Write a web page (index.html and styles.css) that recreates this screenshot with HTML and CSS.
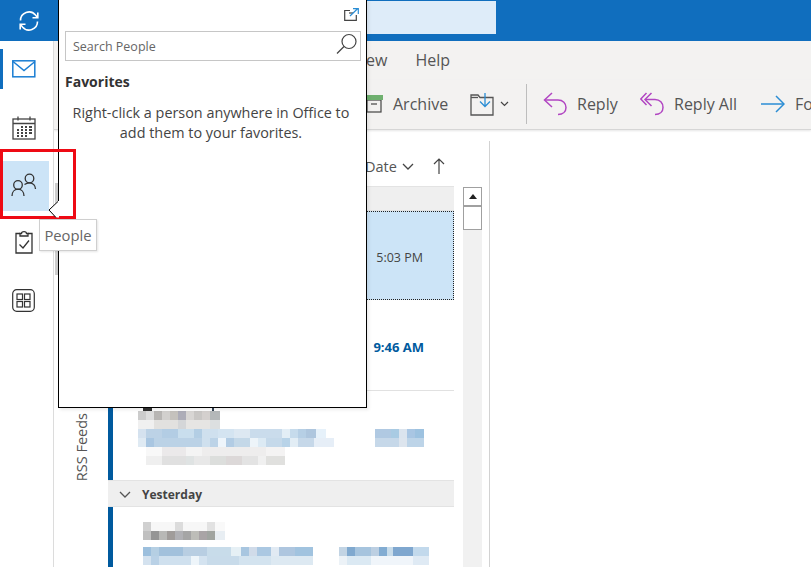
FILE: index.html
```html
<!DOCTYPE html>
<html lang="en">
<head>
<meta charset="utf-8">
<title>Outlook People</title>
<link rel="stylesheet" href="styles.css">
</head>
<body>
<div class="app">
  <header class="topbar">
    <svg class="sync" width="24" height="24" viewBox="0 0 24 24" fill="none" stroke="#fff" stroke-width="1.6"><path d="M3.500 11.500A8.500 8.500 0 0 1 18.500 6L20.500 8.500"/><path d="M20.800 3.500V8.800H15.500"/><path d="M20.500 12.500A8.500 8.500 0 0 1 5.500 18L3.500 15.500"/><path d="M3.200 20.500V15.200H8.500"/></svg>
    <div class="searchbar"></div>
  </header>
  <div class="body">
    <nav class="rail">
      <div class="rail-item mail">
        <svg width="24" height="18" viewBox="0 0 24 18" fill="none" stroke="#1b7ed3" stroke-width="1.500"><rect x=".8" y=".8" width="22" height="16"/><path d="M1 1.500L12 10.500L23 1.500"/></svg>
      </div>
      <div class="rail-item calendar">
        <svg width="24" height="24" viewBox="0 0 24 24" fill="none" stroke="#444" stroke-width="1.300"><rect x="1" y="3" width="22" height="20"/><path d="M1 7.500H23M6 .5V4.500M18 .5V4.500" /><path d="M9 11h2M13 11h2M17 11h3M5 14h2M9 14h2M13 14h2M17 14h3M5 17h2M9 17h2M13 17h2M17 17h3M5 20h2M9 20h2M13 20h2" stroke-width="2"/></svg>
      </div>
      <div class="rail-item people">
        <svg width="26" height="24" viewBox="0 0 26 24" fill="none" stroke="#333" stroke-width="1.300"><circle cx="7" cy="12" r="4.300"/><path d="M1 23c0-4 2.500-6.800 6-6.800s6 2.800 6 6.800"/><circle cx="18.500" cy="5.500" r="4.300"/><path d="M13.500 11.500c1.300-1 3-1.700 5-1.700 3.500 0 6 2.800 6 6.300"/></svg>
      </div>
      <div class="rail-item tasks">
        <svg width="20" height="24" viewBox="0 0 20 24" fill="none" stroke="#333" stroke-width="1.300"><path d="M6 3.500H2V23H18V3.500H14"/><path d="M6 6V3.500H7.500C7.500 1 12.500 1 12.500 3.500H14V6Z"/><path d="M5.500 14.500L9 18L15 10.500"/></svg>
      </div>
      <div class="rail-item apps">
        <svg width="23" height="23" viewBox="0 0 23 23" fill="none" stroke="#333" stroke-width="1.200"><rect x=".7" y=".7" width="21.600" height="21.600" rx="4"/><rect x="5" y="5" width="5.500" height="5.500"/><rect x="12.500" y="5" width="5.500" height="5.500"/><rect x="5" y="12.500" width="5.500" height="5.500"/><rect x="12.500" y="12.500" width="5.500" height="5.500"/></svg>
      </div>
    </nav>
    <main class="main">
      <div class="tabs">
        <span class="tab">View</span><span class="tab">Help</span>
      </div>
      <div class="ribbon">
        <button class="tool archive">
          <svg width="18" height="18" viewBox="0 0 18 18" fill="none" stroke="#444" stroke-width="1.200"><rect x="2" y="5" width="14" height="12"/><path d="M6 9H12"/><rect x="0" y="0" width="18" height="5" fill="#6fb06f" stroke="none"/></svg>
          <span>Archive</span>
        </button>
        <button class="tool move">
          <svg width="24" height="24" viewBox="0 0 24 24" fill="none" stroke="#555" stroke-width="1.300"><path d="M1 3H8L10 5.500H23V23H1Z"/><path d="M1 5.500H8"/><path d="M15 1V14M10 9.500L15 14.500L20 9.500" stroke="#2a8dd4"/></svg>
          <svg class="caret" width="9" height="6" viewBox="0 0 9 6" fill="none" stroke="#444" stroke-width="1.200"><path d="M1 1L4.500 4.500L8 1"/></svg>
        </button>
        <div class="sep"></div>
        <button class="tool reply">
          <svg width="24" height="24" viewBox="0 0 24 24" fill="none" stroke="#b146c2" stroke-width="1.500"><path d="M9 1L1.500 8L9 15"/><path d="M2 8H15C20 8 23 11.500 23 15.500C23 19.500 20 22.500 15 22.500"/></svg>
          <span>Reply</span>
        </button>
        <button class="tool replyall">
          <svg width="24" height="24" viewBox="0 0 24 24" fill="none" stroke="#b146c2" stroke-width="1.500"><path d="M6.500 1L.8 7L6.500 13"/><path d="M11.500 1L5 7.500L11.500 14"/><path d="M6 7.500H15C20 7.500 23 11 23 15.500C23 19.500 20 22.500 15 22.500"/></svg>
          <span>Reply All</span>
        </button>
        <button class="tool forward">
          <svg width="24" height="18" viewBox="0 0 24 18" fill="none" stroke="#2a8dd4" stroke-width="1.500"><path d="M0 9H23"/><path d="M15 1L23 9L15 17"/></svg>
          <span>Forward</span>
        </button>
      </div>
      <div class="content">
        <aside class="folders"><span class="rss">RSS Feeds</span></aside>
        <section class="list">
          <div class="sort">
            <span>Date</span>
            <svg width="12" height="7" viewBox="0 0 12 7" fill="none" stroke="#444" stroke-width="1.300"><path d="M1 1L6 6L11 1"/></svg>
            <svg class="up" width="12" height="16" viewBox="0 0 12 16" fill="none" stroke="#444" stroke-width="1.200"><path d="M6 16V1M1 6L6 1L11 6"/></svg>
          </div>
          <div class="group today"></div>
          <div class="row selected"><span class="time">5:03 PM</span></div>
          <div class="row unread divided"><span class="time strong">9:46 AM</span></div>
          <div class="row unread mosaic-row">
            <div class="px sliver"></div>
            <div class="px a1"></div>
            <div class="px a2"></div>
            <div class="pair">
              <div><div class="px b1"></div><div class="px b2"></div></div>
              <div><div class="px c1"></div><div class="px c2"></div></div>
            </div>
            <div class="px d1"></div>
            <div class="px d2"></div>
          </div>
          <div class="group yesterday">
            <svg width="12" height="7" viewBox="0 0 12 7" fill="none" stroke="#555" stroke-width="1.300"><path d="M1 1L6 6L11 1"/></svg>
            <span>Yesterday</span>
          </div>
          <div class="row unread mosaic-row last">
            <div class="px e1"></div>
            <div class="px e2"></div>
            <div class="px f1"></div>
            <div class="px f2"></div>
          </div>
        </section>
        <div class="scrollbar">
          <div class="scroll-btn"><i class="arrow"></i></div>
          <div class="scroll-thumb"></div>
        </div>
        <div class="reading"></div>
      </div>
    </main>
  </div>

  <div class="rail-gutter"></div>

  <div class="popup">
    <div class="popup-top">
      <svg width="15" height="13" viewBox="0 0 15 13" fill="none" stroke-width="1.200"><path d="M6 2.500H.7V12.300H12.300V7" stroke="#444"/><path d="M5 5H9" stroke="#444"/><path d="M6 8L13.500 .8M9 .7H14.300V6" stroke="#2a8dd4"/></svg>
    </div>
    <div class="search">
      <span>Search People</span>
      <svg width="22" height="22" viewBox="0 0 22 22" fill="none" stroke="#444" stroke-width="1.200"><circle cx="13" cy="8.500" r="7"/><path d="M8 13.500L1 20.500"/></svg>
    </div>
    <h2 class="fav">Favorites</h2>
    <p class="hint">Right-click a person anywhere in Office to<br>add them to your favorites.</p>
  </div>

  <div class="redbox"></div>
  <svg class="pointer" width="11" height="18" viewBox="0 0 11 18"><path d="M10 0L1 9L8 16.500H11V0Z" fill="#fff"/><path d="M10 .5L1 9L8 16.500" fill="none" stroke="#000"/></svg>
  <div class="tooltip">People</div>
</div>
</body>
</html>
```
FILE: styles.css
```css
* { box-sizing: border-box; }
html, body { margin: 0; padding: 0; }
body { width: 811px; height: 567px; overflow: hidden; background: #fff; font-family: "Open Sans", "Noto Sans", sans-serif; color: #444; }
.app { position: relative; width: 811px; height: 567px; overflow: hidden; display: flex; flex-direction: column; }

.topbar { flex: 0 0 41px; background: #106ebe; display: flex; align-items: flex-start; padding: 9px 0 0 17px; }
.searchbar { width: 130px; height: 33px; margin: -8px 0 0 325px; background: #deecf9; }

.body { flex: 1; display: flex; min-height: 0; }
.rail { flex: 0 0 54px; border-right: 1px solid #dcdcdc; display: flex; flex-direction: column; align-items: flex-start; padding-top: 9px; }
.rail-item { display: flex; align-items: center; justify-content: center; width: 47px; margin-left: 0; }
.rail .mail { width: 47px; height: 40px; border-left: 3px solid #106ebe; margin-top: -1px; padding-right: 2px; }
.rail .calendar { height: 28px; margin-top: 25px; }
.rail .people { height: 50px; width: 47px; margin: 19px 0 0 2px; background: #cce4f7; padding: 0 4px 2px 0; }
.rail .tasks { height: 26px; margin-top: 18px; }
.rail .apps { height: 24px; margin-top: 33px; }

.main { flex: 1; min-width: 0; display: flex; flex-direction: column; }
.tabs { flex: 0 0 39px; background: #f3f2f1; display: flex; gap: 28px; justify-content: flex-end; padding: 8px 361px 0 0; font-size: 16px; line-height: 22px; color: #555; white-space: nowrap; }
.ribbon { flex: 0 0 50px; background: #f3f2f1; border-bottom: 1px solid #d6d6d6; box-shadow: 0 1px 2px #e6e6e6; display: flex; align-items: center; padding: 0 0 2px 311px; white-space: nowrap; position: relative; z-index: 1; }
.tool { display: flex; align-items: center; gap: 10px; padding: 0; border: 0; background: none; font: inherit; font-size: 16px; color: #555; flex: none; }
.tool.archive { width: 105px; }
.tool.move { width: 56px; gap: 6px; }
.sep { flex: none; width: 1px; height: 40px; background: #bdbdbd; margin-right: 16px; }
.tool.reply { width: 97px; }
.tool.replyall { width: 121px; }

.content { flex: 1; display: flex; min-height: 0; }
.folders { flex: 0 0 54px; display: flex; justify-content: flex-end; align-items: flex-end; }
.rss { writing-mode: vertical-rl; transform: rotate(180deg); font-size: 14.500px; line-height: 18px; margin: 0 17px 86px 0; color: #555; white-space: nowrap; }

.list { flex: 0 0 346px; display: flex; flex-direction: column; }
.sort { flex: 0 0 56px; display: flex; align-items: center; padding: 16px 0 0 257px; font-size: 14.500px; color: #555; gap: 5px; }
.sort .up { margin-left: 14px; }
.group { background: #efefef; border-top: 1px solid #e3e3e3; border-bottom: 1px solid #e3e3e3; font-size: 12px; font-weight: 700; color: #444; display: flex; align-items: center; }
.group.today { flex: 0 0 25px; padding-left: 34px; }
.group.yesterday { flex: 0 0 27px; padding: 1px 0 0 11px; gap: 11px; }
.row { display: flex; align-items: center; justify-content: flex-end; padding: 4px 30px 0 0; font-size: 12.500px; color: #444; }
.row.selected { flex: 0 0 89px; background: #cce4f7; border: 1px dotted #222; }
.row.unread { flex: 0 0 89px; border-left: 5px solid #005a9e; }
.row.divided { flex-basis: 91px; border-bottom: 1px solid #e1e1e1; padding-top: 4px; }
.time.strong { color: #005a9e; font-weight: 700; font-size: 13px; }

.mosaic-row { display: block; padding: 17px 0 0 25px; }
.px { height: 9px; }
.sliver { height: 3px; width: 82px; background: linear-gradient(90deg, #fff 0 5px, #333 5px 14px, #fff 14px 74px, #345 74px 76px, #fff 76px); }
.a1 { width: 82px; background: linear-gradient(90deg, #ccc 0 8px, #ddd 8px 16px, #b8b6b4 16px 24px, #d2d0ce 24px 32px, #c5c2bd 32px 40px, #adadb8 40px 48px, #d8d6d4 48px 56px, #c9c7c5 56px 64px, #d4d0ce 64px 72px, #b4b8b9 72px); }
.a2 { width: 82px; background: linear-gradient(90deg, #f0f0f0 0 16px, #e2e1df 16px 40px, #d4d6d8 40px 48px, #e6e5e3 48px 72px, #dcdfe0 72px); }
.pair { display: flex; }
.pair > div:first-child { width: 237px; }
.pair > div:last-child { width: 49px; }
.b1 { width: 188px; background: linear-gradient(90deg, #d5e2ef 0 8px, #bcd2e6 8px 24px, #b3cde4 24px 40px, #c9deed 40px 56px, #b3cee4 56px 64px, #cfe0ee 64px 80px, #d4e4f1 80px 96px, #dde8f2 96px 112px, #cadcec 112px 144px, #e3eef6 144px 152px, #c6dbec 152px 160px, #b6cfe5 160px 168px, #aec6de 168px 178px, #e6f1fa 178px); }
.b2 { width: 196px; background: linear-gradient(90deg, #dfeaf3 0 8px, #a9c6e1 8px 16px, #bbd2e6 16px 64px, #cfe0ee 64px 72px, #bcd3e7 72px 80px, #eef5fb 80px 88px, #b2cce4 88px 96px, #c4d8e8 96px 112px, #edf4f9 112px 120px, #dceaf4 120px 128px, #c5d9ea 128px 144px, #b8d3e8 144px 152px, #e2edf5 152px 160px, #c6d8e9 160px 176px, #e6eef7 176px); }
.c1 { width: 49px; background: linear-gradient(90deg, #b0c9e2 0 16px, #a9cbe3 16px 24px, #dbe4ee 24px 32px, #a9c6e3 32px 40px, #9dc2e0 40px); }
.c2 { width: 49px; background: linear-gradient(90deg, #c6d8e9 0 24px, #dde5ee 24px 32px, #bdd4e8 32px); }
.d1 { width: 139px; margin-left: 8px; background: linear-gradient(90deg, #f8f8f8 0 16px, #ebe9ea 16px 40px, #f4f4f4 40px 56px, #eeeded 56px 120px, #f4f3f3 120px); }
.d2 { width: 139px; margin-left: 8px; background: linear-gradient(90deg, #efefef 0 16px, #e0e0e0 16px 40px, #dfe3e3 40px 48px, #e8e8e8 48px 64px, #dcdedc 64px 80px, #dcd8d8 80px 96px, #e3e3e3 96px 112px, #f0f0f0 112px 120px, #e0e0de 120px); }

.row.last { flex: 1; border-left: 5px solid #005a9e; padding: 15px 0 0 30px; }
.e1 { width: 82px; background: linear-gradient(90deg, #d0d0d0 0 8px, #f7f7f7 8px 32px, #dcdcdc 32px 40px, #f7f7f7 40px 64px, #e2e2e2 64px 72px, #f9f9f9 72px); }
.e2 { width: 82px; background: linear-gradient(90deg, #c0c0c0 0 8px, #959595 8px 16px, #b8b8b6 16px 24px, #a09c9a 24px 32px, #b0b0b4 32px 40px, #a5a5a5 40px 48px, #bdbdb8 48px 56px, #a9a4a6 56px 64px, #a0a4a0 64px 72px, #e8eef3 72px); }
.f1 { width: 286px; margin: 7px 0 0 0; background: linear-gradient(90deg, #9cbfdd 0 8px, #b5cfe3 8px 16px, #a2c1dc 16px 40px, #b8cee2 40px 64px, #c8dcea 64px 88px, #e6f0f5 88px 98px, #a8c6e0 98px 106px, #d0dbe9 106px 114px, #abc8e2 114px 128px, #e1eaf3 128px 136px, #aec6df 136px 152px, #a1c3df 152px 170px, #fff 170px 196px, #c2d4e4 196px 204px, #80a9cf 204px 212px, #a6c4de 212px 228px, #bccfe2 228px 236px, #82acd2 236px 244px, #c8dcea 244px 250px, #7fa7cf 250px 270px, #c2d9ec 270px); }
.f2 { width: 286px; background: linear-gradient(90deg, #d4e2ef 0 8px, #b9d1e6 8px 16px, #cfe0ee 16px 48px, #eef5fa 48px 56px, #d4e3f0 56px 64px, #c8dbea 64px 96px, #d3e3ef 96px 128px, #dde9f2 128px 170px, #fff 170px 196px, #ecf2f7 196px 204px, #dbe9f3 204px 228px, #f0f5fa 228px 270px, #dfeaf4 270px); }

.scrollbar { flex: 0 0 19px; margin: 57px 0 0 9px; background: #f1f1f1; }
.scroll-btn { height: 19px; background: #fff; border: 1px solid #a0a0a0; display: flex; align-items: center; justify-content: center; }
.arrow { width: 0; height: 0; border-left: 4.500px solid transparent; border-right: 4.500px solid transparent; border-bottom: 5px solid #222; }
.scroll-thumb { height: 24px; background: #fff; border: 1px solid #a0a0a0; }
.reading { flex: 1; margin: 11px 0 0 7px; border-left: 1px solid #d2d2d2; background: #fff; }

.rail-gutter { position: absolute; left: 55px; top: 183px; width: 3px; height: 92px; background: #cdcdcd; }

.popup { position: absolute; left: 58px; top: -1px; width: 309px; height: 409px; background: #fff; border: 1px solid #000; box-shadow: 2px 2px 3px rgba(0,0,0,.08); z-index: 2; padding: 0 5px 0 6px; color: #333; }
.popup-top { height: 30px; display: flex; justify-content: flex-end; padding: 8px 2px 0 0; }
.search { height: 30px; border: 1px solid #c6c6c6; margin-top: 1px; display: flex; align-items: center; justify-content: space-between; padding: 0 2px 0 7px; font-size: 12.500px; color: #666; }
.search svg { margin-top: -4px; }
.fav { margin: 11px 0 0; font-size: 14px; line-height: 20px; font-weight: 700; color: #333; }
.hint { margin: 11px 0 0; padding-right: 4px; text-align: center; font-size: 14.400px; line-height: 20px; color: #444; white-space: nowrap; }

.redbox { position: absolute; left: 0; top: 149px; width: 76px; height: 70px; border: 3px solid #ee0a14; z-index: 3; }
.pointer { position: absolute; left: 48px; top: 201px; z-index: 4; }
.tooltip { position: absolute; left: 39px; top: 219px; width: 58px; height: 32px; background: #fff; border: 1px solid #cfcfcf; box-shadow: 1px 1px 2px rgba(0,0,0,.1); font-size: 14.800px; line-height: 30px; text-align: center; color: #666; z-index: 4; }
```
